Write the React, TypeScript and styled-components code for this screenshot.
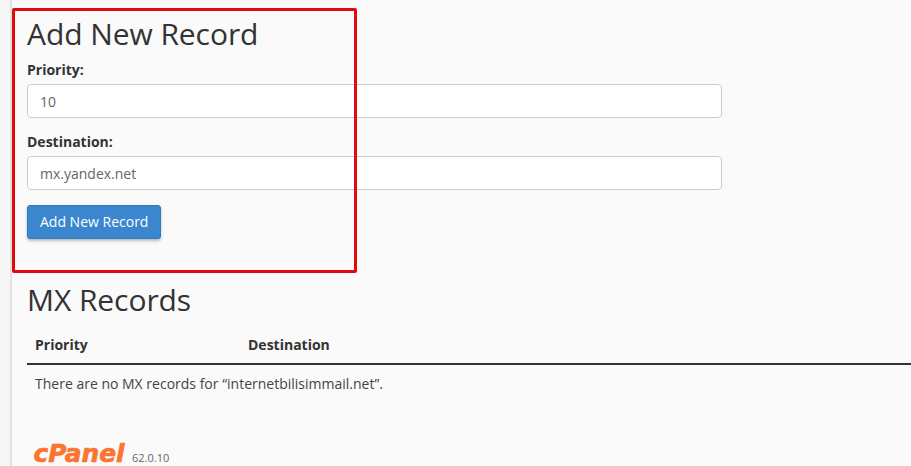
import React from 'react'
import styled, { createGlobalStyle } from 'styled-components'

const GlobalStyle = createGlobalStyle`
  html, body {
    margin: 0;
    padding: 0;
    height: 466px;
    overflow: hidden;
    background: #fafafa;
  }
  body {
    font-family: "Open Sans", "Liberation Sans", sans-serif;
    font-size: 14px;
    color: #333;
  }
`

const Page = styled.div`
  position: relative;
  display: flex;
  width: 911px;
  height: 466px;
  overflow: hidden;
`

const SideEdge = styled.div`
  flex: 0 0 10px;
  background: #f6f6f6;
  border-right: 2px solid #e2e2e2;
`

const Content = styled.main`
  flex: 1;
  min-width: 0;
  padding: 15px 0 0 15px;
`

const Heading = styled.h2`
  margin: 0;
  font-size: 30px;
  font-weight: 400;
  line-height: 38px;
  letter-spacing: -0.07px;
  color: #333;
`

const AddForm = styled.form`
  width: 695px;
  height: 221px;
  padding-top: 7px;
`

const Field = styled.div`
  margin-bottom: 14px;
`

const Label = styled.label`
  display: block;
  margin-bottom: 4px;
  font-size: 14px;
  font-weight: 700;
  line-height: 20px;
`

const Input = styled.input`
  display: block;
  width: 100%;
  height: 34px;
  box-sizing: border-box;
  padding: 6px 12px;
  border: 1px solid #ccc;
  border-radius: 4px;
  background: #fff;
  font-family: inherit;
  font-size: 14px;
  color: #666;
`

const PrimaryButton = styled.button`
  display: block;
  height: 34px;
  margin-top: 15px;
  padding: 0 12px 2px;
  border: 1px solid #2e79b9;
  border-radius: 3px;
  background: #3a87cf;
  box-shadow: 0 2px 3px rgba(0, 0, 0, 0.25);
  font-family: inherit;
  font-size: 14px;
  color: #fff;
`

const RecordsTable = styled.table`
  width: 884px;
  margin-top: 7px;
  border-collapse: collapse;
  font-size: 14px;
`

const HeadCell = styled.th<{ $width?: number }>`
  width: ${p => (p.$width ? `${p.$width}px` : 'auto')};
  height: 38px;
  padding: 0 8px 1px;
  box-sizing: border-box;
  border-bottom: 2px solid #333;
  font-weight: 700;
  text-align: left;
`

const BodyCell = styled.td`
  padding: 9px 8px 8px;
  line-height: 20px;
  color: #444;
`

const Footer = styled.footer`
  display: flex;
  align-items: flex-end;
  gap: 6px;
  margin-top: 38px;
  padding-left: 6px;
`

const Version = styled.span`
  margin-bottom: 1px;
  font-size: 11px;
  line-height: 15px;
  color: #666;
`

const Highlight = styled.div`
  position: absolute;
  left: 12px;
  top: 8px;
  width: 345px;
  height: 265px;
  box-sizing: border-box;
  border: 3px solid #e00b0b;
  border-radius: 2px;
  pointer-events: none;
`

const CpanelLogo = () => (
  <svg width="93" height="26" viewBox="0 0 93 26" aria-label="cPanel">
    <text
      x="0.5"
      y="21.5"
      fontFamily="'DejaVu Sans', sans-serif"
      fontSize="25"
      fontWeight="700"
      fontStyle="italic"
      fill="#fb7430"
      stroke="#fb7430"
      strokeWidth="0.7"
      strokeLinejoin="round"
      textLength="91"
      lengthAdjust="spacingAndGlyphs"
    >
      cPanel
    </text>
  </svg>
)

export default function App() {
  return (
    <Page>
      <GlobalStyle />
      <SideEdge />
      <Content>
        <Heading>Add New Record</Heading>
        <AddForm onSubmit={e => e.preventDefault()}>
          <Field>
            <Label>Priority:</Label>
            <Input defaultValue="10" />
          </Field>
          <Field>
            <Label>Destination:</Label>
            <Input defaultValue="mx.yandex.net" />
          </Field>
          <PrimaryButton type="submit">Add New Record</PrimaryButton>
        </AddForm>
        <Heading>MX Records</Heading>
        <RecordsTable>
          <thead>
            <tr>
              <HeadCell $width={213}>Priority</HeadCell>
              <HeadCell>Destination</HeadCell>
            </tr>
          </thead>
          <tbody>
            <tr>
              <BodyCell colSpan={2}>There are no MX records for “internetbilisimmail.net”.</BodyCell>
            </tr>
          </tbody>
        </RecordsTable>
        <Footer>
          <CpanelLogo />
          <Version>62.0.10</Version>
        </Footer>
      </Content>
      <Highlight />
    </Page>
  )
}
